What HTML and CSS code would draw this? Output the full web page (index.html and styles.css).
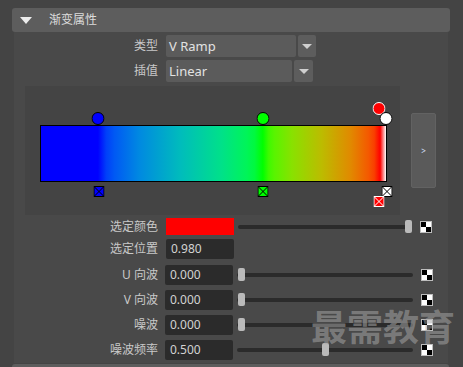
FILE: index.html
```html
<!DOCTYPE html>
<html>
<head>
<meta charset="utf-8">
<link rel="stylesheet" href="styles.css">
</head>
<body>
<div class="frame">
  <div class="frame-header"><span class="tri"></span><span class="title">渐变属性</span></div>
  <div class="panel">
    <div class="row row-a">
      <span class="lbl">类型</span>
      <div class="combo">
        <div class="combo-val w130">V Ramp</div>
        <div class="combo-btn w18"><span class="arrow"></span></div>
      </div>
    </div>
    <div class="row row-b">
      <span class="lbl">插值</span>
      <div class="combo">
        <div class="combo-val w126">Linear</div>
        <div class="combo-btn w19"><span class="arrow"></span></div>
      </div>
    </div>

    <div class="ramp-row">
      <div class="ramp-area">
        <div class="ramp">
          <div class="ramp-bar"></div>
          <svg class="dot" style="left:16.7%" width="13" height="13" viewBox="0 0 13 13"><circle cx="6.5" cy="6.5" r="6" fill="#0000ff" stroke="#000" stroke-width="1"/></svg>
          <svg class="dot" style="left:64.3%" width="13" height="13" viewBox="0 0 13 13"><circle cx="6.5" cy="6.5" r="6" fill="#00ff00" stroke="#000" stroke-width="1"/></svg>
          <svg class="dot dot-sel" style="left:97.7%" width="13" height="13" viewBox="0 0 13 13"><circle cx="6.5" cy="6.5" r="6" fill="#ff0000" stroke="#fff" stroke-width="1"/></svg>
          <svg class="dot" style="left:99.7%" width="13" height="13" viewBox="0 0 13 13"><circle cx="6.5" cy="6.5" r="6" fill="#ffffff" stroke="#000" stroke-width="1"/></svg>

          <svg class="sq" style="left:16.9%" width="11" height="11" viewBox="0 0 11 11"><rect x="0.5" y="0.5" width="10" height="10" fill="#0000ff" stroke="#000"/><path d="M1 1L10 10M10 1L1 10" stroke="#000" stroke-width="1"/></svg>
          <svg class="sq" style="left:64.4%" width="11" height="11" viewBox="0 0 11 11"><rect x="0.5" y="0.5" width="10" height="10" fill="#00ff00" stroke="#000"/><path d="M1 1L10 10M10 1L1 10" stroke="#000" stroke-width="1"/></svg>
          <svg class="sq" style="left:99.9%" width="11" height="11" viewBox="0 0 11 11"><rect x="0.5" y="0.5" width="10" height="10" fill="#ffffff" stroke="#000"/><path d="M1 1L10 10M10 1L1 10" stroke="#000" stroke-width="1"/></svg>
          <svg class="sq sq-sel" style="left:97.8%" width="11" height="11" viewBox="0 0 11 11"><rect x="0.5" y="0.5" width="10" height="10" fill="#ff0000" stroke="#fff"/><path d="M1 1L10 10M10 1L1 10" stroke="#fff" stroke-width="1"/></svg>
        </div>
      </div>
      <div class="ramp-btn">&gt;</div>
    </div>

    <div class="prow r1">
      <span class="lbl">选定颜色</span>
      <div class="swatch"></div>
      <div class="slider w174"><div class="track"></div><div class="thumb" style="left:167px"></div></div>
      <span class="checker"></span>
    </div>
    <div class="prow r2">
      <span class="lbl">选定位置</span>
      <div class="field">0.980</div>
    </div>
    <div class="prow r3 tight">
      <span class="lbl">U 向波</span>
      <div class="field">0.000</div>
      <div class="slider w176"><div class="track"></div><div class="thumb" style="left:1px"></div></div>
      <span class="checker"></span>
    </div>
    <div class="prow tight">
      <span class="lbl">V 向波</span>
      <div class="field">0.000</div>
      <div class="slider w176"><div class="track"></div><div class="thumb" style="left:1px"></div></div>
      <span class="checker"></span>
    </div>
    <div class="prow tight">
      <span class="lbl">噪波</span>
      <div class="field">0.000</div>
      <div class="slider w176"><div class="track"></div><div class="thumb" style="left:1px"></div></div>
      <span class="checker"></span>
    </div>
    <div class="prow tight">
      <span class="lbl">噪波频率</span>
      <div class="field">0.500</div>
      <div class="slider w176"><div class="track"></div><div class="thumb" style="left:85px"></div></div>
      <span class="checker"></span>
    </div>
  </div>
  <div class="next-header"></div>
</div>
<div class="watermark">最需教育</div>
</body>
</html>
```
FILE: styles.css
```css
* { box-sizing: border-box; }
html, body { margin: 0; padding: 0; }
body {
  background: #444444;
  width: 463px;
  height: 367px;
  overflow: hidden;
  position: relative;
  font-family: "Noto Sans", "Noto Sans CJK SC", sans-serif;
  font-size: 12px;
  color: #c8c8c8;
}
.frame { padding: 8px 13px 0 12px; }
.frame-header {
  height: 24px;
  background: #5d5d5d;
  border-radius: 3px;
  display: flex;
  align-items: center;
}
.tri {
  width: 0; height: 0;
  border-left: 6px solid transparent;
  border-right: 6px solid transparent;
  border-top: 7px solid #ececec;
  margin-left: 8px;
}
.title { margin-left: 17px; color: #dcdcdc; font-size: 12px; line-height: 1; }

.panel { margin: 0 2px; background: #494949; padding: 3px 0 3px; }

.row { display: flex; align-items: center; height: 22px; }
.row-a { margin-top: 0; }
.row-b { margin-top: 3px; }
.lbl { width: 144px; flex: none; text-align: right; margin-right: 8px; line-height: 1; color: #c8c8c8; }
.combo { display: flex; gap: 2px; height: 22px; }
.combo-val {
  background: #5b5b5b;
  border-radius: 2px;
  padding-left: 3px;
  font-size: 13px;
  line-height: 22px;
  color: #e2e2e2;
}
.w130 { width: 130px; }
.w126 { width: 126px; }
.combo-btn {
  background: #5d5d5d;
  border-radius: 2px;
  display: flex;
  align-items: center;
  justify-content: center;
}
.w18 { width: 18px; }
.w19 { width: 19px; }
.arrow {
  width: 0; height: 0;
  border-left: 5px solid transparent;
  border-right: 5px solid transparent;
  border-top: 5px solid #cfcfcf;
}

.ramp-row { display: flex; align-items: flex-start; margin: 4px 0 0 11px; }
.ramp-area { width: 375px; height: 129px; background: #444444; padding: 39px 0 0 15px; }
.ramp { position: relative; width: 347px; height: 57px; }
.ramp-bar {
  width: 100%; height: 100%;
  border: 1px solid #000;
  background: linear-gradient(to right,
    #0000ff 0%, #0000ff 16.5%,
    rgb(0,63,249) 18.9%, rgb(0,89,244) 21.3%, rgb(0,137,225) 28.45%,
    rgb(0,188,188) 40.4%, rgb(0,225,137) 52.35%, rgb(0,244,89) 59.5%,
    rgb(0,249,63) 61.9%, #00ff00 64.3%,
    rgb(63,249,0) 66%, rgb(89,244,0) 67.7%, rgb(137,225,0) 72.8%,
    rgb(188,188,0) 81.3%, rgb(225,137,0) 89.8%, rgb(244,89,0) 94.9%,
    rgb(249,63,0) 96.6%, #ff0000 98.3%, #ffffff 100%);
}
.dot { position: absolute; top: -13px; transform: translateX(-50%); display: block; }
.dot-sel { top: -23px; }
.sq { position: absolute; top: 61px; transform: translateX(-50%); display: block; }
.sq-sel { top: 71px; }
.ramp-btn {
  margin: 27px 0 0 11px;
  width: 25px; height: 75px;
  background: #5a5a5a;
  border: 1px solid #626262;
  border-radius: 2px;
  display: flex;
  align-items: center;
  justify-content: center;
  font-size: 8px;
  color: #d8e0ff;
}

.prow { display: flex; align-items: center; height: 20px; margin-top: 5px; }
.prow.r1 { height: 17px; margin-top: 3px; }
.prow.r2 { margin-top: 4px; }
.prow.r3 { margin-top: 6px; }
.prow.tight .lbl { margin-right: 7px; }
.swatch { width: 68px; height: 17px; background: #ff0000; flex: none; }
.field {
  width: 68px; height: 20px; flex: none;
  background: #2b2b2b;
  border-radius: 2px;
  padding-left: 5px;
  line-height: 20px;
  color: #d2d2d2;
}
.slider { position: relative; height: 20px; margin-left: 4px; flex: none; }
.w174 { width: 174px; }
.w176 { width: 176px; }
.track {
  position: absolute; left: 0; right: 0; top: 50%;
  height: 4px; margin-top: -2px;
  background: #2b2b2b;
  border-radius: 2px;
}
.thumb {
  position: absolute; top: 50%;
  width: 7px; height: 13px; margin-top: -7px;
  background: #bababa;
  border-radius: 2px;
}
.checker {
  width: 12px; height: 12px; flex: none;
  margin-left: 8px;
  border: 1px solid #bdbdbd;
  background: conic-gradient(#fff 0 25%, #000 0 50%, #fff 0 75%, #000 0);
}
.next-header {
  margin: 1px 1px 0 0;
  height: 10px;
  background: #5d5d5d;
  border-radius: 3px 3px 0 0;
}
.watermark {
  position: absolute;
  left: 311px;
  top: 307px;
  font-family: "Noto Sans CJK SC", sans-serif;
  font-size: 36px;
  font-weight: 700;
  line-height: 1;
  color: rgba(165,165,165,0.55);
  white-space: nowrap;
}
```
